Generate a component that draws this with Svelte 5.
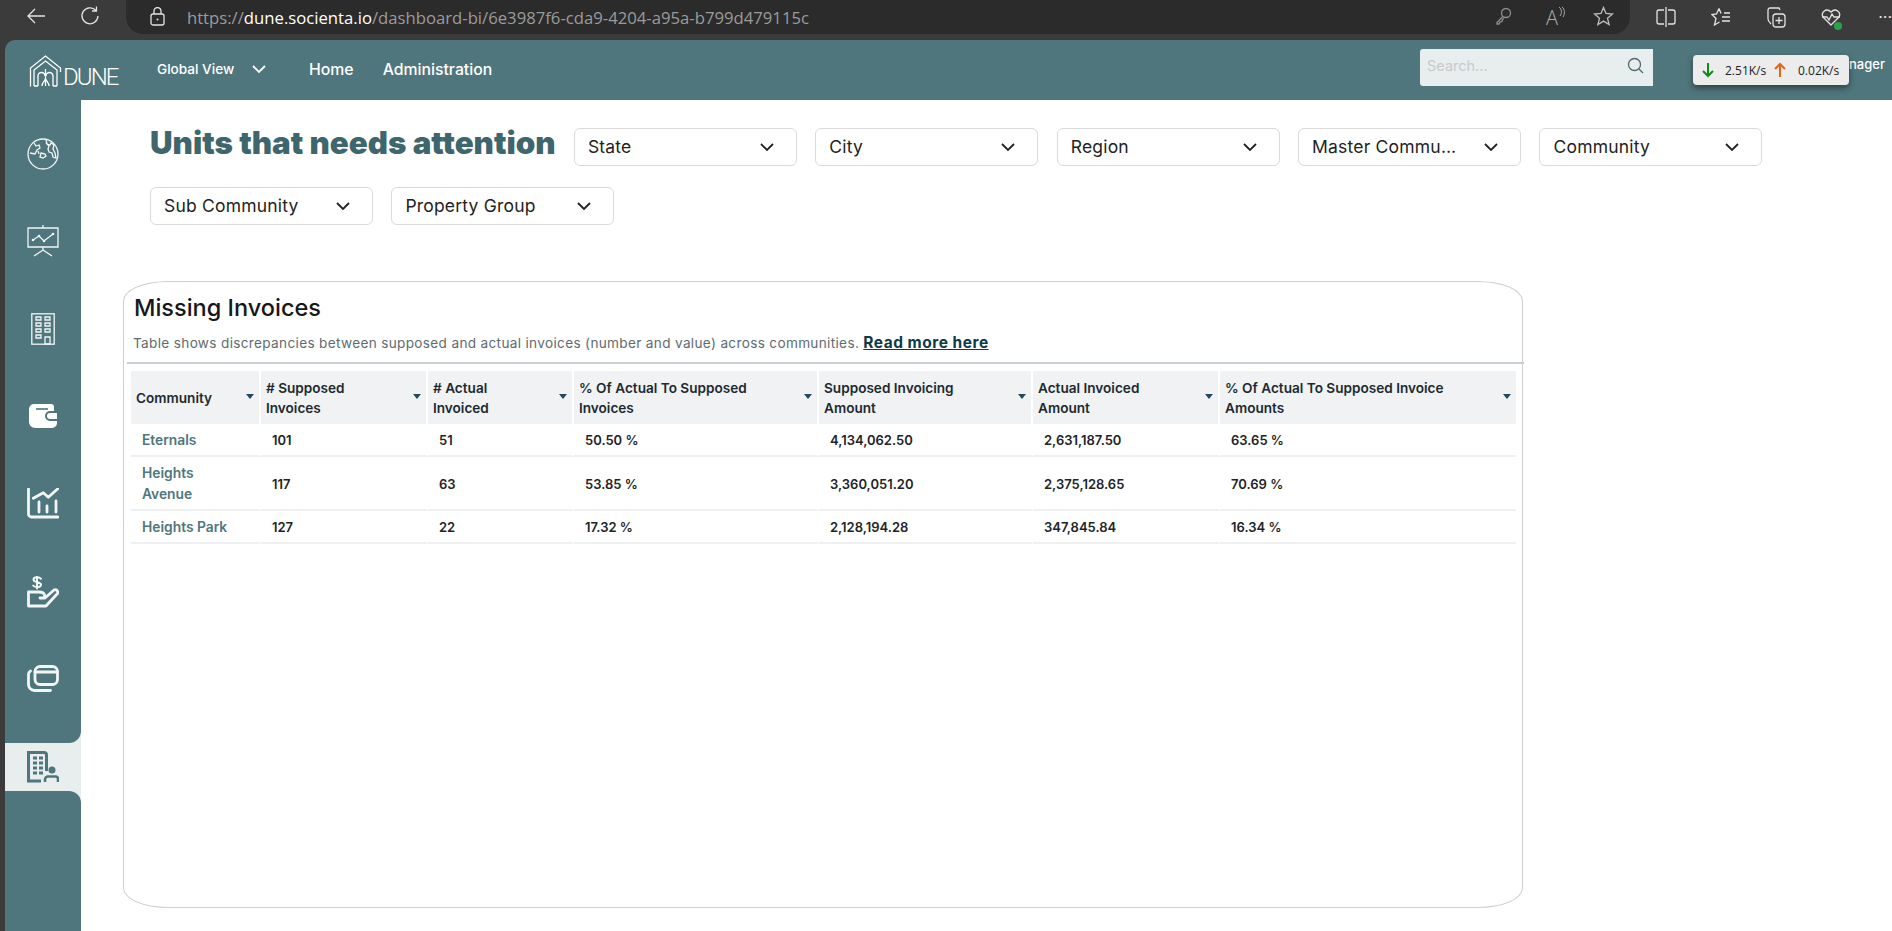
<script>
  const topSelects = ['State', 'City', 'Region', 'Master Community', 'Community', 'Sub Community', 'Property Group'];
  const columns = [
    { lines: ['Community'], w: 130 },
    { lines: ['# Supposed', 'Invoices'], w: 167 },
    { lines: ['# Actual', 'Invoiced'], w: 146 },
    { lines: ['% Of Actual To Supposed', 'Invoices'], w: 245 },
    { lines: ['Supposed Invoicing', 'Amount'], w: 214 },
    { lines: ['Actual Invoiced', 'Amount'], w: 187 },
    { lines: ['% Of Actual To Supposed Invoice', 'Amounts'], w: 296 }
  ];
  const rows = [
    ['Eternals', '101', '51', '50.50 %', '4,134,062.50', '2,631,187.50', '63.65 %'],
    ['Heights Avenue', '117', '63', '53.85 %', '3,360,051.20', '2,375,128.65', '70.69 %'],
    ['Heights Park', '127', '22', '17.32 %', '2,128,194.28', '347,845.84', '16.34 %']
  ];
</script>

<div class="page">
  <header class="chrome">
    <svg class="c-back" width="20" height="18" viewBox="0 0 20 18"><path d="M19 9H2M9 2 2 9l7 7" /></svg>
    <svg class="c-reload" width="20" height="20" viewBox="0 0 20 20"><path d="M16 4.500A8 8 0 1 0 18 10M16.500 .5v4.500h-4.500" /></svg>
    <div class="address">
      <svg class="c-lock" width="15" height="19" viewBox="0 0 15 19"><rect x="1" y="7" width="13" height="11" rx="2" /><path d="M4 7V4a3.500 3.500 0 0 1 7 0v3" /><circle cx="7.500" cy="12.500" r="1" class="dot" /></svg>
      <div class="url">https://<b>dune.socienta.io</b>/dashboard-bi/6e3987f6-cda9-4204-a95a-b799d479115c</div>
      <svg class="c-key" width="17" height="18" viewBox="0 0 17 18"><circle cx="11" cy="6" r="4.500" /><path d="M7.800 9.500 2 15.500V17h2l1-2 2-.5 .5-2 1.500-1" /></svg>
      <span class="c-a">A<svg width="7" height="12" viewBox="0 0 7 12"><path d="M1 1c3 2 3 6 1 9M4 1c3 2 3 7 1 10" /></svg></span>
      <svg class="c-star" width="21" height="20" viewBox="0 0 21 20"><path d="M10.500 1.500 13 7.500l6.500.5-5 4.200 1.600 6.300-5.600-3.400-5.600 3.400 1.600-6.300-5-4.200L8 7.500z" /></svg>
    </div>
    <div class="tools">
      <svg width="20" height="20" viewBox="0 0 20 20"><path d="M8 3H3a2 2 0 0 0-2 2v10a2 2 0 0 0 2 2h5M12 3h5a2 2 0 0 1 2 2v10a2 2 0 0 1-2 2h-5M10 0v20" /></svg>
      <svg width="20" height="20" viewBox="0 0 20 20"><path d="M8 1.500 5.500 7 1 7.500l4 4L3.500 18l5-3M8 1.500 10 6.500M11 10H19M11 14H19M13 6h6" /></svg>
      <svg width="20" height="21" viewBox="0 0 20 21"><path d="M14 3l-1-2H4a2 2 0 0 0-2 2v9c0 2 1 3 3 5" /><rect x="7" y="7" width="12" height="13" rx="3" /><path d="M13 10v7M9.500 13.500h7" /></svg>
      <span class="heart"><svg width="20" height="19" viewBox="0 0 20 19"><path d="M10 17 2.500 9.500C-1 5 5 -1 10 4c5-5 11 1 7.500 5.500z" /><path d="M1 9h5l2 3 3-6 2 3h6" /></svg><i></i></span>
      <span class="more">···</span>
    </div>
  </header>

  <div class="app">
    <nav class="topbar">
      <div class="logo">
        <svg width="33" height="32" viewBox="0 0 33 32"><path d="M1.500 31.500V13L16.500 1l15 12v4M5 31V15L16.500 6 28 15v16M5 31h4M9 31V21a3.500 3.500 0 0 1 7 0M17 21a3.500 3.500 0 0 1 7 0v10M16.500 14v17M13 31c0-4 3.500-5 3.500-8 0 3 3.500 4 3.500 8M24 31h4" /></svg>
        <span>DUNE</span>
      </div>
      <button class="global">Global View<svg width="14" height="9" viewBox="0 0 14 9"><path d="m1 1 6 6 6-6" /></svg></button>
      <a class="nav-link home">Home</a>
      <a class="nav-link">Administration</a>
      <div class="search">
        <span>Search...</span>
        <svg width="17" height="17" viewBox="0 0 17 17"><circle cx="7.500" cy="7.500" r="6" /><path d="m12 12 4 4" /></svg>
      </div>
      <div class="who">nager</div>
      <div class="net">
        <svg width="12" height="16" viewBox="0 0 12 16"><path class="g" d="M6 1v13M1 9l5 5 5-5" /></svg>
        <span class="n1">2.51K/s</span>
        <svg width="12" height="16" viewBox="0 0 12 16"><path class="o" d="M6 15V2M1 7l5-5 5 5" /></svg>
        <span class="n2">0.02K/s</span>
      </div>
    </nav>

    <div class="body">
      <aside class="sidebar">
        <div class="side-top">
          <span class="ic i1"><svg width="32" height="32" viewBox="0 0 32 32"><circle cx="16" cy="16" r="15" /><path d="M7 5l2 3 3-1 1 3-3 2-2 4-5-1M19 2l1 4 3 1 1-2 3 2-1 4 2 4 1 5-3-1-1-4-3-1-1-3 1-3-3-3M14 15l4 1 1 2-3 2-3-1zM11 13l1 3" /></svg></span>
          <span class="ic i2"><svg width="32" height="32" viewBox="0 0 32 32"><path d="M16 0v3M1 3h30v19H1zM16 22v3M7 31l9-6 9 6M6 15l6-4 5 5 9-7" /><circle class="dotf" cx="6" cy="15" r="1.300" /><circle class="dotf" cx="12" cy="11" r="1.300" /><circle class="dotf" cx="17" cy="16" r="1.300" /><circle class="dotf" cx="26" cy="9" r="1.300" /></svg></span>
          <span class="ic i3"><svg width="24" height="32" viewBox="0 0 24 32"><rect x=".8" y=".8" width="22.400" height="30.400" /><path d="M5 4h5v3H5zM14 4h5v3h-5zM5 10h5v3H5zM14 10h5v3h-5zM5 16h5v3H5zM14 16h5v3h-5zM5 22h5v3H5zM14 24h5v7h-5z" /></svg></span>
          <span class="ic i4"><svg width="28" height="24" viewBox="0 0 28 24"><path class="fill" d="M5 0h17a3 3 0 0 1 3 3v4h-4a5 5 0 0 0 0 10h7v2a5 5 0 0 1-5 5H6a6 6 0 0 1-6-6V5a5 5 0 0 1 5-5z" /><path class="fill" d="M21 9h7v6h-7a3 3 0 0 1 0-6z" /><path class="notch" d="M7 5h12" /></svg></span>
          <span class="ic i5"><svg width="32" height="32" viewBox="0 0 32 32"><path class="thick" d="M1.500 1v25a3 3 0 0 0 3 3H31M12 24V14M20 24V18M29 24V13M6.300 10.300 16.300 4.700l5 4.600 10-9" /></svg></span>
          <span class="ic i6"><svg width="32" height="32" viewBox="0 0 32 32"><path class="thick" d="M13 22h5l9-8a2.600 2.600 0 0 1 3.500 3.500L19 30H1.500V16H12c3 0 5 1 5.500 3a2.300 2.300 0 0 1-1.500 3" /><path class="mid" d="M14 2.800C12 .5 6.500 .8 6.500 3.800c0 3.200 7.500 1.800 7.500 5 0 2.800-5.500 3-7.800 .8M10 0v12.500" /></svg></span>
          <span class="ic i7"><svg width="32" height="27" viewBox="0 0 32 27"><rect class="thick" x="8" y="1.500" width="22.500" height="18" rx="5" /><path class="thick" d="M8 7h22M3.500 6A4 4 0 0 0 1.500 10v9a6 6 0 0 0 6 6.500h16" /></svg></span>
        </div>
        <div class="side-active">
          <svg width="32" height="32" viewBox="0 0 32 32"><path d="M14 30H1.500V1.500H17a2.500 2.500 0 0 1 2.500 2.500V20" /><path class="win" d="M6 7h4M12 7h4M6 12h4M12 12h4M6 17h4M12 17h4M6 22h4M12 22h4" /><circle class="solid" cx="25" cy="19" r="3.500" /><path class="body-line" d="M18 31v-2.500a3 3 0 0 1 3-3h8a2.500 2.500 0 0 1 2 3V31" /></svg>
        </div>
        <div class="side-bottom"></div>
      </aside>

      <main class="main">
        <section class="filters">
          <h1>Units that needs attention</h1>
          {#each topSelects as s}
            <button class="select"><span>{s}</span><svg width="14" height="9" viewBox="0 0 14 9"><path d="m1 1 6 6 6-6" /></svg></button>
          {/each}
        </section>

        <section class="card">
          <h2>Missing Invoices</h2>
          <p class="desc">Table shows discrepancies between supposed and actual invoices (number and value) across communities. <a>Read more here</a></p>
          <div class="rule"></div>
          <table>
            <colgroup>
              {#each columns as c}<col style="width:{c.w}px" />{/each}
            </colgroup>
            <thead>
              <tr>
                {#each columns as c}
                  <th><div class="th"><span>{#each c.lines as l, i}{#if i > 0}<br />{/if}{l}{/each}</span><i class="caret"></i></div></th>
                {/each}
              </tr>
            </thead>
            <tbody>
              {#each rows as r}
                <tr>
                  {#each r as v, i}
                    <td class:name={i === 0}>{v}</td>
                  {/each}
                </tr>
              {/each}
            </tbody>
          </table>
        </section>
      </main>
    </div>
  </div>
</div>

<style>
  :global(body) {
    margin: 0;
    background: #3b3b3b;
    font-family: Inter, "Noto Sans", sans-serif;
  }
  .page {
    height: 931px;
    overflow: hidden;
    position: relative;
  }
  .chrome {
    height: 40px;
    display: flex;
    align-items: flex-start;
    background: #3b3b3b;
  }
  .chrome svg { fill: none; stroke: #e4e4e4; stroke-width: 1.3; }
  .c-back { margin: 7px 0 0 26px; }
  .c-reload { margin: 6px 0 0 34px; }
  .address {
    margin-left: 26px;
    width: 1508px;
    height: 34px;
    background: #2b2b2b;
    border-radius: 0 0 17px 17px;
    display: flex;
    align-items: center;
    position: relative;
    box-sizing: border-box;
    padding-left: 24px;
  }
  .c-lock { margin-top: -2px; }
  .dot { fill: #e4e4e4; stroke: none; }
  .url {
    margin-left: 22px;
    font: 16.700px "Open Sans", sans-serif;
    color: #9b9b9b;
    white-space: nowrap;
    width: 1308px;
  }
  .url b { font-weight: 400; color: #fff; }
  .chrome .c-key { stroke: #8f8f8f; position: absolute; left: 1369px; top: 7px; }
  .c-a {
    position: absolute; left: 1420px; top: 6px;
    color: #aaa; font: 300 20px "Open Sans", sans-serif; line-height: 24px;
  }
  .chrome .c-a svg { position: absolute; left: 12px; top: 0; stroke: #aaa; stroke-width: 1; }
  .chrome .c-star { stroke: #bdbdbd; position: absolute; left: 1467px; top: 6px; }
  .tools {
    display: flex;
    align-items: center;
    margin: 6px 0 0 26px;
    gap: 35px;
    height: 22px;
  }
  .heart { position: relative; display: block; height: 19px; }
  .heart i {
    position: absolute; right: -1px; bottom: -3px;
    width: 8px; height: 8px; border-radius: 50%; background: #2aa24a;
  }
  .more { color: #e4e4e4; font-size: 16px; margin-left: 2px; white-space: nowrap; }

  .app {
    margin-left: 5px;
    height: 891px;
    background: #4f767c;
    border-radius: 10px 0 0 0;
    display: flex;
    flex-direction: column;
  }
  .topbar {
    height: 60px;
    flex: none;
    display: flex;
    align-items: center;
    position: relative;
    color: #fff;
  }
  .logo { display: flex; align-items: flex-end; margin: 2px 0 0 24px; width: 91px; }
  .logo svg { flex: none; fill: none; stroke: #fff; stroke-width: 1.300; }
  .logo span {
    font: 300 24px/24px Roboto, sans-serif;
    letter-spacing: -1.900px;
    margin-left: 1px;
    margin-bottom: -2px;
    white-space: nowrap;
  }
  .global {
    all: unset;
    margin-left: 37px;
    margin-top: -2px;
    font-size: 13.600px;
    font-weight: 500;
    width: 112px;
    display: flex;
    align-items: center;
    gap: 12px;
  }
  .global svg { fill: none; stroke: #fff; stroke-width: 1.800; margin-left: 6px; }
  .nav-link { font-size: 15.800px; font-weight: 500; margin-left: 29px; margin-top: -1px; }
  .nav-link.home { margin-left: 40px; }
  .search {
    position: absolute;
    left: 1415px;
    top: 9px;
    width: 233px;
    height: 37px;
    background: #e8eeee;
    border-radius: 3px 0 0 3px;
    display: flex;
    align-items: center;
    justify-content: space-between;
    box-sizing: border-box;
    padding: 0 9px 4px 7px;
    font-size: 14.500px;
    color: #c6cacb;
  }
  .search svg { fill: none; stroke: #50686c; stroke-width: 1.300; }
  .who { position: absolute; left: 1844px; top: 16px; font-size: 13px; font-weight: 500; }
  .net {
    position: absolute;
    left: 1688px;
    top: 15px;
    width: 156px;
    height: 30px;
    background: #ececec;
    border-radius: 4px;
    box-shadow: 0 3px 6px rgba(0, 0, 0, .45);
    color: #222;
    font: 12px "Open Sans", sans-serif;
    display: flex;
    align-items: center;
    padding-left: 9px;
    box-sizing: border-box;
  }
  .net svg { fill: none; stroke-width: 2; }
  .net .g { stroke: #118a1c; }
  .net .o { stroke: #e8641a; }
  .n1 { margin: 0 7px 0 11px; width: 42px; white-space: nowrap; }
  .n2 { margin-left: 12px; white-space: nowrap; }

  .body { flex: 1; display: flex; min-height: 0; }
  .sidebar {
    width: 76px;
    flex: none;
    background: #e8eeee;
    display: flex;
    flex-direction: column;
  }
  .side-top {
    height: 643px;
    background: #4f767c;
    border-radius: 0 0 12px 0;
    position: relative;
  }
  .ic { position: absolute; display: block; line-height: 0; }
  .ic svg { fill: none; stroke: #f2f6f6; stroke-width: 1.300; }
  .i1 { left: 22px; top: 38px; }
  .i2 { left: 22px; top: 125px; }
  .i3 { left: 26px; top: 213px; }
  .i4 { left: 24px; top: 304px; }
  .i5 { left: 22px; top: 388px; }
  .i6 { left: 22px; top: 476px; }
  .i7 { left: 22px; top: 565px; }
  .ic .thick { stroke-width: 2.800; stroke-linecap: round; stroke-linejoin: round; fill: none; }
  .ic .mid { stroke-width: 2; stroke-linecap: round; }
  .ic .dotf { fill: #f2f6f6; stroke: none; }
  .ic .fill { fill: #fff; stroke: none; }
  .ic .notch { stroke: #4f767c; stroke-width: 1.600; }
  .side-active {
    height: 48px;
    flex: none;
    display: flex;
    align-items: center;
    padding-left: 22px;
    box-sizing: border-box;
  }
  .side-active svg { fill: none; stroke: #4f767c; stroke-width: 3; }
  .side-active .win { stroke-width: 3; }
  .side-active .body-line { stroke-width: 2.600; }
  .side-active .solid { fill: #4f767c; stroke: none; }
  .side-bottom {
    flex: 1;
    background: #4f767c;
    border-radius: 0 12px 0 0;
  }

  .main {
    flex: 1;
    min-width: 0;
    background: #fff;
    padding: 28px 0 0 42px;
    box-sizing: border-box;
  }
  .filters {
    display: flex;
    flex-wrap: wrap;
    align-items: flex-start;
    column-gap: 18.400px;
    row-gap: 21px;
    padding-left: 27px;
  }
  h1 {
    margin: -3px 0 0;
    width: 405.500px;
    font-size: 31.300px;
    line-height: 36px;
    font-weight: 900;
    color: #3f666c;
    white-space: nowrap;
  }
  .select {
    all: unset;
    width: 223px;
    height: 38px;
    border: 1px solid #dadada;
    border-radius: 6px;
    box-sizing: border-box;
    display: flex;
    align-items: center;
    padding: 0 22px 2px 13px;
    font-size: 17.500px;
    letter-spacing: .2px;
    color: #222;
    background: #fff;
    justify-content: space-between;
    gap: 12px;
  }
  .select span { max-width: 152px; overflow: hidden; text-overflow: ellipsis; white-space: nowrap; }
  .select svg { flex: none; fill: none; stroke: #222; stroke-width: 1.800; margin-top: 2px; }

  .card {
    margin-top: 56px;
    width: 1400px;
    height: 627px;
    border: 1px solid #cfcfcf;
    border-radius: 45px / 20px;
    box-sizing: border-box;
    padding: 10px 0 0;
    position: relative;
  }
  h2 {
    margin: 0 0 0 10px;
    font-size: 23.500px;
    line-height: 32px;
    font-weight: 500;
    color: #15171a;
  }
  .desc {
    margin: 6px 0 0 9px;
    font-size: 13.600px;
    letter-spacing: .33px;
    line-height: 26px;
    color: #5d6c70;
    white-space: nowrap;
  }
  .desc a {
    font-size: 15.500px;
    letter-spacing: .5px;
    font-weight: 700;
    color: #0e3b45;
    text-decoration: underline;
  }
  .rule {
    height: 2px;
    background: #c8ced6;
    margin: 6px -2px 0 3px;
  }
  table {
    margin: 7px 0 0 7px;
    width: 1385px;
    table-layout: fixed;
    border-collapse: separate;
    border-spacing: 0;
  }
  th {
    height: 53px;
    background: #f0f2f4;
    padding: 0 5px;
    border-right: 2px solid #fff;
    text-align: left;
    font-size: 13.600px;
    line-height: 20px;
    font-weight: 600;
    color: #1c2a30;
    box-sizing: border-box;
  }
  th:last-child { border-right: 0; }
  .th { display: flex; align-items: center; justify-content: space-between; gap: 8px; }
  .caret {
    flex: none;
    width: 0;
    height: 0;
    border-left: 4.500px solid transparent;
    border-right: 4.500px solid transparent;
    border-top: 5px solid #234a5c;
    margin-top: -2px;
  }
  td {
    padding: 6px 11px 4px;
    border-right: 2px solid #fff;
    border-bottom: 2px solid #eef0f1;
    font-size: 13px;
    line-height: 21px;
    font-weight: 600;
    color: #1d2428;
    box-sizing: border-box;
  }
  td:last-child { border-right: 0; }
  td.name { color: #4f767c; font-size: 13.800px; padding-right: 25px; }
</style>
